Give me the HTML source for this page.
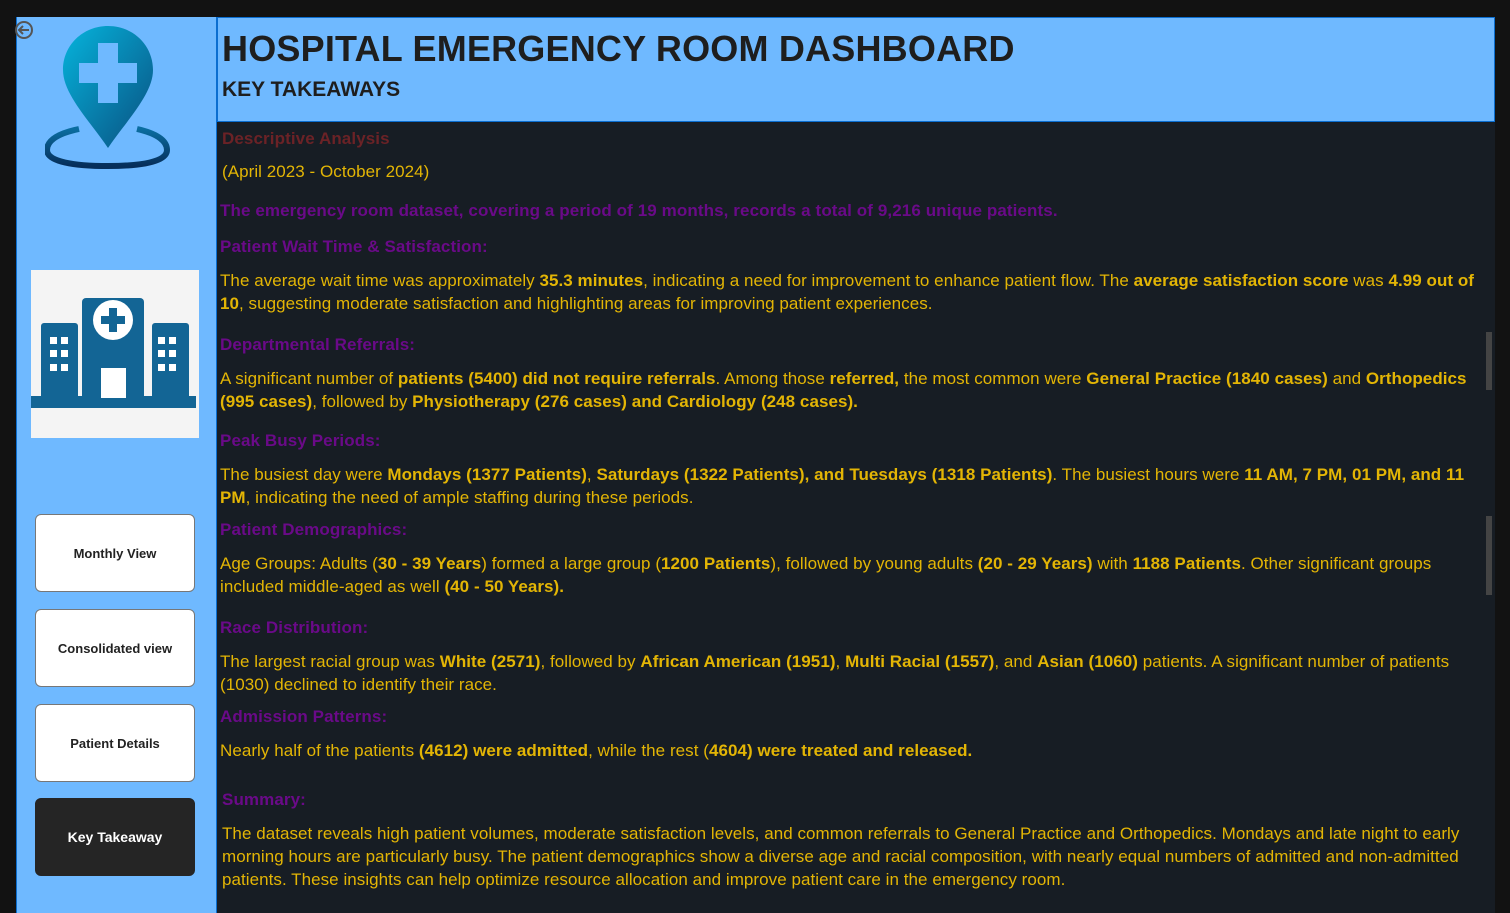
<!DOCTYPE html>
<html><head><meta charset="utf-8"><style>
*{margin:0;padding:0;box-sizing:border-box}
body{width:1510px;height:913px;background:#121212;position:relative;overflow:hidden;font-family:"Liberation Sans",sans-serif}
#side{position:absolute;left:16px;top:17px;width:201px;height:896px;background:#6fb9ff;border-left:1px solid #0b6ed0;border-right:1px solid #0b6ed0}
#head{position:absolute;left:217px;top:17px;width:1278px;height:105px;background:#6fb9ff;border:1px solid #0b6ed0}
#main{position:absolute;left:217px;top:122px;width:1278px;height:791px;background:#171d24}
.t{position:absolute;left:220px;white-space:nowrap;color:#e3b505;font-size:17px;letter-spacing:0.05px}
.h{font-weight:bold;color:#6a0a88;font-size:17px;letter-spacing:0.1px}
b{font-weight:bold}
.btn{position:absolute;left:35px;width:160px;height:78px;background:#fff;border:1px solid #777;border-radius:6px;display:flex;align-items:center;justify-content:center;font-weight:bold;font-size:13px;color:#222}
.sb{position:absolute;left:1486px;width:6px;background:#444}
</style></head><body>
<div id="side"></div>
<div id="head"></div>
<div id="main"></div>
<svg style="position:absolute;left:14px;top:20px" width="22" height="22" viewBox="0 0 22 22"><circle cx="10" cy="10" r="8" fill="none" stroke="#555" stroke-width="2"/><path d="M15 10H6M9 6L5 10L9 14" fill="none" stroke="#555" stroke-width="2"/></svg>
<svg style="position:absolute;left:45px;top:24px" width="126" height="146" viewBox="0 0 126 146">
<defs><linearGradient id="g" x1="0" y1="0" x2="1" y2="1"><stop offset="0" stop-color="#05b4dc"/><stop offset="1" stop-color="#0a4f80"/></linearGradient>
<linearGradient id="g2" x1="0" y1="0" x2="0" y2="1"><stop offset="0" stop-color="#0a6da0"/><stop offset="1" stop-color="#062e5a"/></linearGradient></defs>
<path d="M63 2C38 2 18 21 18 46C18 70 44 96 63 124C82 96 108 70 108 46C108 21 88 2 63 2Z" fill="url(#g)"/>
<path d="M53 19H73V39H92V59H73V79H53V59H34V39H53Z" fill="#6fb9ff"/>
<path d="M34 105C10 110 2 118 2 126C2 138 30 142 63 142C96 142 122 138 122 126C122 118 114 110 92 105" fill="none" stroke="url(#g2)" stroke-width="6"/>
</svg>
<div style="position:absolute;left:31px;top:270px;width:168px;height:168px;background:#f4f4f4"></div>
<svg style="position:absolute;left:31px;top:270px" width="168" height="168" viewBox="0 0 168 168">
<g fill="#136595"><rect x="10" y="53" width="37" height="78" rx="3"/><rect x="121" y="53" width="37" height="78" rx="3"/><rect x="51" y="28" width="62" height="103" rx="4"/><rect x="0" y="126" width="165" height="12"/></g>
<g fill="#fff"><circle cx="82" cy="50" r="20"/><rect x="70" y="98" width="25" height="30"/>
<rect x="19" y="67" width="7" height="7"/><rect x="30" y="67" width="7" height="7"/><rect x="19" y="80" width="7" height="7"/><rect x="30" y="80" width="7" height="7"/><rect x="19" y="94" width="7" height="7"/><rect x="30" y="94" width="7" height="7"/>
<rect x="127" y="67" width="7" height="7"/><rect x="138" y="67" width="7" height="7"/><rect x="127" y="80" width="7" height="7"/><rect x="138" y="80" width="7" height="7"/><rect x="127" y="94" width="7" height="7"/><rect x="138" y="94" width="7" height="7"/></g>
<path d="M78 38H86V46H94V54H86V62H78V54H70V46H78Z" fill="#136595"/>
</svg>
<div class="btn" style="top:514px">Monthly View</div>
<div class="btn" style="top:609px">Consolidated view</div>
<div class="btn" style="top:704px">Patient Details</div>
<div class="btn" style="top:798px;background:#252525;color:#fff;border-color:#252525;font-size:14px">Key Takeaway</div>
<div style="position:absolute;left:222px;top:28px;font-size:36px;font-weight:bold;color:#1e1e1e;letter-spacing:0.2px">HOSPITAL EMERGENCY ROOM DASHBOARD</div>
<div style="position:absolute;left:222px;top:78px;font-size:21px;font-weight:bold;color:#1e1e1e">KEY TAKEAWAYS</div>
<div class="t h" style="top:129px;left:222px;color:#6b2226">Descriptive Analysis</div>
<div class="t" style="top:162px;left:222px">(April 2023 - October 2024)</div>
<div class="t h" style="top:201px">The emergency room dataset, covering a period of 19 months, records a total of 9,216 unique patients.</div>
<div class="t h" style="top:237px">Patient Wait Time &amp; Satisfaction:</div>
<div class="t" style="top:271px">The average wait time was approximately <b>35.3 minutes</b>, indicating a need for improvement to enhance patient flow. The <b>average satisfaction score</b> was <b>4.99 out of</b></div>
<div class="t" style="top:294px"><b>10</b>, suggesting moderate satisfaction and highlighting areas for improving patient experiences.</div>
<div class="t h" style="top:335px">Departmental Referrals:</div>
<div class="t" style="top:369px">A significant number of <b>patients (5400) did not require referrals</b>. Among those <b>referred,</b> the most common were <b>General Practice (1840 cases)</b> and <b>Orthopedics</b></div>
<div class="t" style="top:392px"><b>(995 cases)</b>, followed by <b>Physiotherapy (276 cases) and Cardiology (248 cases).</b></div>
<div class="t h" style="top:431px">Peak Busy Periods:</div>
<div class="t" style="top:465px">The busiest day were <b>Mondays (1377 Patients)</b>, <b>Saturdays (1322 Patients), and Tuesdays (1318 Patients)</b>. The busiest hours were <b>11 AM, 7 PM, 01 PM, and 11</b></div>
<div class="t" style="top:488px"><b>PM</b>, indicating the need of ample staffing during these periods.</div>
<div class="t h" style="top:520px">Patient Demographics:</div>
<div class="t" style="top:554px">Age Groups: Adults (<b>30 - 39 Years</b>) formed a large group (<b>1200 Patients</b>), followed by young adults <b>(20 - 29 Years)</b> with <b>1188 Patients</b>. Other significant groups</div>
<div class="t" style="top:577px">included middle-aged as well <b>(40 - 50 Years).</b></div>
<div class="t h" style="top:618px">Race Distribution:</div>
<div class="t" style="top:652px">The largest racial group was <b>White (2571)</b>, followed by <b>African American (1951)</b>, <b>Multi Racial (1557)</b>, and <b>Asian (1060)</b> patients. A significant number of patients</div>
<div class="t" style="top:675px">(1030) declined to identify their race.</div>
<div class="t h" style="top:707px">Admission Patterns:</div>
<div class="t" style="top:741px">Nearly half of the patients <b>(4612) were admitted</b>, while the rest (<b>4604) were treated and released.</b></div>
<div class="t h" style="top:790px;left:222px">Summary:</div>
<div class="t" style="top:824px;left:222px">The dataset reveals high patient volumes, moderate satisfaction levels, and common referrals to General Practice and Orthopedics. Mondays and late night to early</div>
<div class="t" style="top:847px;left:222px">morning hours are particularly busy. The patient demographics show a diverse age and racial composition, with nearly equal numbers of admitted and non-admitted</div>
<div class="t" style="top:870px;left:222px">patients. These insights can help optimize resource allocation and improve patient care in the emergency room.</div>
<div class="sb" style="top:332px;height:58px"></div>
<div class="sb" style="top:516px;height:79px"></div>
</body></html>
